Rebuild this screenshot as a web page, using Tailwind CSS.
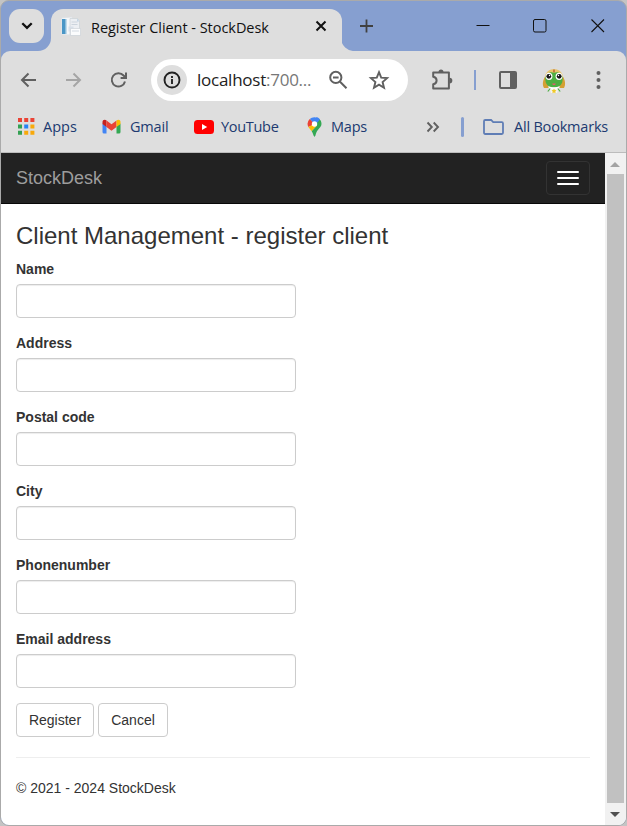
<!DOCTYPE html>
<html lang="en">
<head>
<meta charset="utf-8">
<title>Register Client - StockDesk</title>
<script src="https://cdn.jsdelivr.net/npm/@tailwindcss/browser@4"></script>
</head>
<body class="w-[627px] h-[826px] overflow-hidden bg-[#c4c4c4]">
<div class="flex h-[826px] w-[627px] flex-col overflow-hidden rounded-[9px] border border-[#aaaaaa] bg-[#869fd0] font-['Open_Sans',sans-serif]">

  <!-- Tab strip -->
  <div class="flex h-[50px] shrink-0 items-start">
    <button class="mt-[8px] ml-[8px] flex h-[34px] w-[35px] shrink-0 items-center justify-center rounded-[11px] bg-[#dedede]">
      <svg width="14" height="14" viewBox="0 0 14 14" fill="none" stroke="#111" stroke-width="2.300"><path d="M2.300 4.200 7 8.800l4.700-4.600"/></svg>
    </button>
    <svg class="mt-[37px] -ml-[6px] shrink-0" width="13" height="13" viewBox="0 0 13 13"><path d="M13 0v13H0A13 13 0 0 0 13 0Z" fill="#dedede"/></svg>
    <div class="mt-[8px] flex h-[42px] w-[291px] shrink-0 items-center rounded-t-[12px] bg-[#dedede]">
      <svg class="mb-[7px] ml-[9px] shrink-0" width="22" height="22" viewBox="0 0 22 22">
        <path d="M1.500 2 12 1v18l-10.500-.5z" fill="#f5f7f9" stroke="#dde1e5" stroke-width=".7"/>
        <path d="M2 3h3.700v15H2z" fill="#4a96c6"/><path d="M5.700 3h1v15h-1z" fill="#a9cfe6"/>
        <path d="M10 2.500h7.500l2 2V19H10z" fill="#eceff3" stroke="#ccd1d6" stroke-width=".7"/>
        <path d="M17 2.500v3h2.500" fill="#c2d4e4"/>
        <path d="M11.500 6h6M11.500 8.500h6" stroke="#ccd4dd"/>
        <path d="M8.500 10.500h5v5h-5z" fill="#d7e0ea"/>
        <path d="M10.500 12.500h10v7h-10z" fill="#fbfcfd" stroke="#cdd2d8" stroke-width=".7"/><path d="M12 15h7" stroke="#d3dae2"/>
      </svg>
      <span class="mb-[5px] ml-[9px] w-[216px] whitespace-nowrap text-[14.5px] leading-5 tracking-[-0.04px] text-[#111]">Register Client - StockDesk</span>
      <svg class="mb-[8px] ml-[6px] shrink-0" width="16" height="16" viewBox="0 0 16 16" stroke="#111" stroke-width="2"><path d="m3.500 3.500 9 9m0-9-9 9"/></svg>
    </div>
    <svg class="mt-[37px] -ml-px shrink-0" width="14" height="13" viewBox="0 0 14 13"><path d="M0 0v13h14A13 13 0 0 1 0 0Z" fill="#dedede"/></svg>
    <svg class="mt-[17px] ml-[3px] shrink-0" width="16" height="16" viewBox="0 0 16 16" stroke="#404040" stroke-width="1.800"><path d="M8.500 1.500v13M2 8h13"/></svg>
    <svg class="mt-[18px] ml-[102px] shrink-0" width="14" height="14" viewBox="0 0 14 14" stroke="#111"><path d="M.5 6.500h13"/></svg>
    <svg class="mt-[18px] ml-[43px] shrink-0" width="14" height="14" viewBox="0 0 14 14" fill="none" stroke="#111"><rect x=".5" y=".5" width="12.500" height="12.500" rx="1.500"/></svg>
    <svg class="mt-[18px] ml-[44px] shrink-0" width="14" height="14" viewBox="0 0 14 14" stroke="#111" stroke-width="1.100"><path d="m.5.5 12.500 12.500m0-12.500L.5 13"/></svg>
  </div>

  <div class="h-[102px] shrink-0 rounded-t-[9px] bg-[#dedede]">
    <!-- Address bar -->
    <div class="flex h-[58px] items-center">
      <svg class="ml-[18px] shrink-0" width="20" height="20" viewBox="0 0 20 20" fill="none" stroke="#606060" stroke-width="2"><path d="M17 10H3m6.500-6.500L3 10l6.500 6.500"/></svg>
      <svg class="ml-[25px] shrink-0" width="20" height="20" viewBox="0 0 20 20" fill="none" stroke="#a5a5a5" stroke-width="2"><path d="M2 10h14m-6.500-6.500 6.500 6.500-6.500 6.500"/></svg>
      <svg class="ml-[25px] shrink-0" width="20" height="20" viewBox="0 0 20 20" fill="none" stroke="#606060" stroke-width="2"><path d="M16 11.500a6.700 6.700 0 1 1-1.400-6L17 8M17 2.500v5.400h-5.400"/></svg>
      <div class="ml-[22px] flex h-[42px] w-[257px] shrink-0 items-center rounded-full bg-white">
        <div class="ml-[6px] flex size-[30px] items-center justify-center rounded-full bg-[#dedede]">
          <svg width="18" height="18" viewBox="0 0 18 18" fill="none" stroke="#222" stroke-width="1.900"><circle cx="9" cy="9" r="7.500"/><path d="M9 8v5M9 5v1.900"/></svg>
        </div>
        <div class="ml-[10px] w-[126px] whitespace-nowrap text-[17px] tracking-[-0.25px] text-[#222]">localhost<span class="text-[#777]">:700...</span></div>
        <svg class="ml-[5px] shrink-0" width="20" height="20" viewBox="0 0 20 20" fill="none" stroke="#606060" stroke-width="2"><circle cx="7.800" cy="7.400" r="5.600"/><path d="m11.800 11.500 6.700 6.700M5 7.400h5.600"/></svg>
        <svg class="ml-[20px] shrink-0" width="22" height="22" viewBox="0 0 22 22" fill="none" stroke="#606060" stroke-width="1.900"><path d="m11 3.200 2.200 5.400 5.900.5-4.500 3.900 1.400 5.700-5-3.100-5 3.100L7.400 13 2.900 9.100l5.900-.5Z"/></svg>
      </div>
      <svg class="ml-[22px] shrink-0" width="24" height="24" viewBox="0 0 24 24"><path d="M3.200 4.600h15.700v15.900H3.200v-4.200c2.400-.4 3.400-2 3.400-3.700S5.600 9.200 3.200 8.800z" fill="none" stroke="#606060" stroke-width="2" stroke-linejoin="round"/><path d="M8.500 4a2.500 2.500 0 0 1 5 0zM19.500 9.700a2.700 2.700 0 0 1 0 5.700z" fill="#606060"/></svg>
      <div class="ml-[20px] h-[20px] w-[2px] shrink-0 bg-[#869fd0]"></div>
      <svg class="ml-[22px] shrink-0" width="20" height="20" viewBox="0 0 20 20"><rect x="2" y="2" width="16" height="16" rx="1" fill="none" stroke="#606060" stroke-width="2"/><path d="M12 2h6v16h-6z" fill="#606060"/></svg>
      <svg class="mt-[2px] ml-[24px] shrink-0" width="24" height="26" viewBox="0 0 24 26">
        <path d="M3.500 8C.5 12 .2 17 2 20h4.500L5.500 9zM20.500 8c3 4 3.300 9 1.500 12h-4.500l1-11z" fill="#d4a033"/>
        <path d="M2.800 8.500C4.500 3 8 1.300 12 1.300S19.500 3 21.200 8.500z" fill="#e8c36a"/><path d="M11.300 1.500h1.400v3h-1.400z" fill="#b45d2b"/>
        <path d="M3.500 8.500C5 4 9 3.700 12 4.700c3-1 7-.7 8.500 3.800.8 5.500-.8 11-8.500 11s-9.300-5.500-8.500-11" fill="#4daf43"/>
        <ellipse cx="7" cy="8.300" rx="3.400" ry="3.600" fill="#fff"/><ellipse cx="17" cy="8.300" rx="3.400" ry="3.600" fill="#fff"/>
        <circle cx="6.800" cy="8.300" r="2.400" fill="#151515"/><circle cx="17.200" cy="8.300" r="2.400" fill="#151515"/><circle cx="7.500" cy="7.500" r=".7" fill="#fff"/><circle cx="16.500" cy="7.500" r=".7" fill="#fff"/>
        <path d="M10.200 15.500h3.600c-.3 2-3.300 2-3.600 0" fill="#e45b70"/><path d="M6.500 18.500c3 1 8 1 11 0l-2 3.500h-7z" fill="#fff"/><path d="M8 21h8l-.8 4H8.800z" fill="#f5f5f5"/><path d="m5.800 23.500 2.400-3M18.200 23.500l-2.400-3" stroke="#4daf43" stroke-width="1.200"/><path d="m12 20.500.8 1.500 1.700.2-1.200 1.300.3 1.700-1.600-.8-1.600.8.300-1.700-1.200-1.300 1.700-.2z" fill="#f0c927"/>
      </svg>
      <svg class="ml-[29px] shrink-0" width="6" height="20" viewBox="0 0 6 20" fill="#606060"><circle cx="3.500" cy="3" r="2"/><circle cx="3.500" cy="10" r="2"/><circle cx="3.500" cy="17" r="2"/></svg>
    </div>

    <!-- Bookmarks bar -->
    <div class="flex h-[43px] items-start pt-[8px] text-[14.5px] leading-[20px] text-[#203a70]">
      <svg class="mt-[1px] ml-[17px] shrink-0" width="17" height="17" viewBox="0 0 17 17">
        <path d="M0 0h4v4H0zM6.200 0h4v4h-4zM12.400 0h4v4h-4z" fill="#ea4335"/><path d="M0 6.400h4v4H0zM0 12.700h4v4H0z" fill="#34a153"/><path d="M6.200 6.400h4v4h-4z" fill="#2684f5"/><path d="M12.400 6.400h4v4h-4zM6.200 12.700h4v4h-4zM12.400 12.700h4v4h-4z" fill="#f8a90b"/>
      </svg>
      <span class="ml-[8px] w-[34px] whitespace-nowrap">Apps</span>
      <svg class="mt-[2px] ml-[25px] shrink-0" width="19" height="15" viewBox="0 0 19 15"><path d="M.5 4.500 4.500 7v7.500H2A1.500 1.500 0 0 1 .5 13z" fill="#4285f4"/><path d="M18.500 4.500 14.500 7v7.500H17a1.500 1.500 0 0 0 1.500-1.500z" fill="#34a853"/><path d="M4.500 2v6L.5 5V3C.5.8 2.800.1 4.500 1.400z" fill="#c5221f"/><path d="m4.500 1.500 5 3.800 5-3.800V8l-5 3.700-5-3.700z" fill="#ea4335"/><path d="M14.500 1.500V8l4-3V3c0-2.200-2.300-2.900-4-1.500" fill="#fbbc04"/></svg>
      <span class="ml-[9px] w-[39px] whitespace-nowrap tracking-[-0.2px]">Gmail</span>
      <svg class="mt-[3px] ml-[25px] shrink-0" width="20" height="14" viewBox="0 0 20 14"><rect width="20" height="14" rx="3.500" fill="#f00"/><path d="m8 4 5.200 3L8 10z" fill="#fff"/></svg>
      <span class="ml-[7px] w-[59px] whitespace-nowrap tracking-[-0.3px]">YouTube</span>
      <svg class="ml-[27px] shrink-0" width="15" height="20" viewBox="0 0 15 20">
        <path d="M2.700 2.100 7.500 7 12 1.800A7 7 0 0 0 2.700 2.100" fill="#4285f4"/><path d="M2.700 2.100A7 7 0 0 0 1.300 10L7.500 7z" fill="#ea4335"/><path d="m1.300 10 3.400 4.300L10 8.500 7.500 7z" fill="#fbbc04"/><path d="M12 1.800 9 5l1 3.500-5.300 5.800c1.400 2 1.900 5.400 2.800 5.400 1.200 0 1.100-3.700 3-6.200C12.300 11 14.500 9.500 14.500 7 14.500 4.500 13.500 2.800 12 1.800" fill="#34a853"/><path d="M10 1.800 7.500 4 10 6l3-3.500C12 1 10.500.3 9 .1z" fill="#4285f4"/><circle cx="7.500" cy="7" r="2.700" fill="#fff"/>
      </svg>
      <span class="ml-[9px] w-[36px] whitespace-nowrap tracking-[-0.2px]">Maps</span>
      <svg class="mt-[4px] ml-[59px] shrink-0" width="14" height="12" viewBox="0 0 14 12" fill="none" stroke="#606060" stroke-width="1.900"><path d="m1.500 1.500 4.300 4.500-4.300 4.500M7.700 1.500 12 6l-4.300 4.500"/></svg>
      <div class="ml-[21px] h-[20px] w-[3px] shrink-0 rounded-full bg-[#869fd0]"></div>
      <svg class="mt-[2px] ml-[19px] shrink-0" width="21" height="16" viewBox="0 0 21 16" fill="none" stroke="#5f7db5" stroke-width="1.800"><path d="M2.200 1h5.900l2.100 2.200h8.600q1.200 0 1.200 1.200v9.400q0 1.200-1.200 1.200H2.200Q1 15 1 13.800V2.200Q1 1 2.200 1Z"/></svg>
      <span class="ml-[10px] whitespace-nowrap tracking-[-0.2px]">All Bookmarks</span>
    </div>
    <div class="h-px bg-[#bcbcbc]"></div>
  </div>

  <!-- Page viewport and scrollbar -->
  <div class="flex min-h-0 flex-1 bg-white font-['Liberation_Sans',Arial,sans-serif] text-[14px] leading-[20px] text-[#333]">
    <div class="w-[604px] shrink-0">
      <nav class="flex h-[51px] items-start justify-between border-b border-[#080808] bg-[#222] px-[15px]">
        <a class="pt-[15px] text-[18px] leading-[20px] text-[#9d9d9d]">StockDesk</a>
        <button class="mt-[8px] flex h-[34px] w-[44px] flex-col items-center justify-center gap-[4px] rounded-[4px] border border-[#333]">
          <span class="h-[2px] w-[22px] rounded-[1px] bg-white"></span><span class="h-[2px] w-[22px] rounded-[1px] bg-white"></span><span class="h-[2px] w-[22px] rounded-[1px] bg-white"></span>
        </button>
      </nav>
      <main class="px-[15px] pt-[19px]">
        <h3 class="mb-[10px] text-[24px] leading-[26px]">Client Management - register client</h3>
        <form class="flex flex-col gap-[15px]">
          <label class="flex flex-col gap-[5px] font-bold">Name<input class="h-[34px] w-[280px] rounded-[4px] border border-[#ccc] bg-white shadow-[inset_0_1px_1px_rgba(0,0,0,0.075)]"></label>
          <label class="flex flex-col gap-[5px] font-bold">Address<input class="h-[34px] w-[280px] rounded-[4px] border border-[#ccc] bg-white shadow-[inset_0_1px_1px_rgba(0,0,0,0.075)]"></label>
          <label class="flex flex-col gap-[5px] font-bold">Postal code<input class="h-[34px] w-[280px] rounded-[4px] border border-[#ccc] bg-white shadow-[inset_0_1px_1px_rgba(0,0,0,0.075)]"></label>
          <label class="flex flex-col gap-[5px] font-bold">City<input class="h-[34px] w-[280px] rounded-[4px] border border-[#ccc] bg-white shadow-[inset_0_1px_1px_rgba(0,0,0,0.075)]"></label>
          <label class="flex flex-col gap-[5px] font-bold">Phonenumber<input class="h-[34px] w-[280px] rounded-[4px] border border-[#ccc] bg-white shadow-[inset_0_1px_1px_rgba(0,0,0,0.075)]"></label>
          <label class="flex flex-col gap-[5px] font-bold">Email address<input class="h-[34px] w-[280px] rounded-[4px] border border-[#ccc] bg-white shadow-[inset_0_1px_1px_rgba(0,0,0,0.075)]"></label>
          <div class="flex gap-[4px]">
            <button type="button" class="h-[34px] w-[78px] rounded-[4px] border border-[#ccc] bg-white">Register</button>
            <button type="button" class="h-[34px] w-[70px] rounded-[4px] border border-[#ccc] bg-white">Cancel</button>
          </div>
        </form>
        <hr class="mt-[20px] mb-[20px] border-[#eee]">
        <footer>© 2021 - 2024 StockDesk</footer>
      </main>
    </div>
    <div class="flex flex-1 flex-col items-center bg-[#f1f1f1] pr-[1px]">
      <svg class="mt-[9px] shrink-0" width="10" height="5" viewBox="0 0 10 5"><path d="M0 5 5 0l5 5z" fill="#a3a3a3"/></svg>
      <div class="mt-[7px] h-[629px] w-[17px] shrink-0 bg-[#c1c1c1]"></div>
      <svg class="mt-[9px] shrink-0" width="10" height="5" viewBox="0 0 10 5"><path d="m0 0 5 5 5-5z" fill="#505050"/></svg>
    </div>
  </div>
</div>
</body>
</html>
